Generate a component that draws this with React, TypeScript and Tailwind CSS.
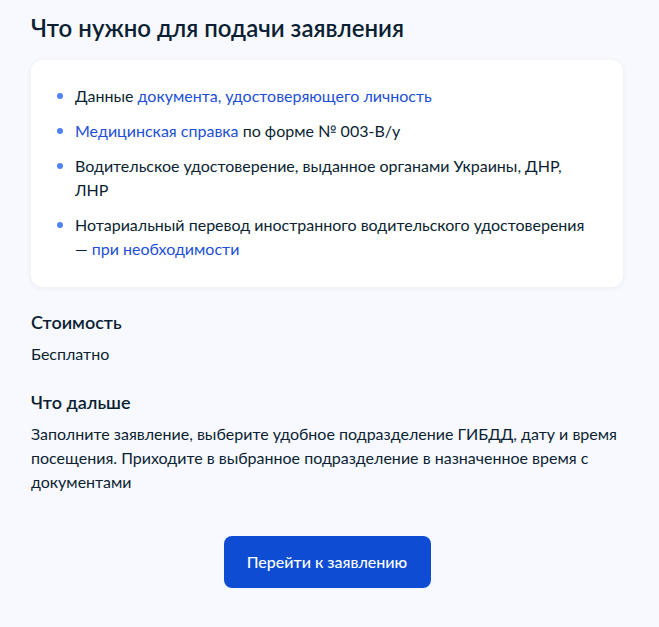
import React from "react";

export default function App() {
  const items: React.ReactNode[] = [
    <>Данные <a className="text-[#1d4fd6]">документа, удостоверяющего личность</a></>,
    <><a className="text-[#1d4fd6]">Медицинская справка</a> по форме № 003-В/у</>,
    <>Водительское удостоверение, выданное органами Украины, ДНР, ЛНР</>,
    <>Нотариальный перевод иностранного водительского удостоверения — <a className="text-[#1d4fd6]">при необходимости</a></>,
  ];
  return (
    <div className="min-h-[627px] bg-[#f8f9fe] text-[#0b1f33]" style={{ fontFamily: "Lato, 'Noto Sans', sans-serif" }}>
      <div className="w-[592px] ml-[31px] pt-[12px] pb-[39px]">
        <h1 className="text-[24px] leading-[32px] font-semibold">Что нужно для подачи заявления</h1>
        <div className="mt-[16px] rounded-[12px] bg-white shadow-[0_1px_6px_rgba(11,31,51,0.06)] px-[24px] pt-[24px] pb-[26px]">
          <ul className="flex flex-col gap-[11px]">
            {items.map((it, i) => (
              <li key={i} className="flex text-[16px] leading-[24px]">
                <span className="mt-[9px] ml-[2px] mr-[12px] h-[6px] w-[6px] shrink-0 rounded-full bg-[#4f82f3]" />
                <span>{it}</span>
              </li>
            ))}
          </ul>
        </div>
        <h2 className="mt-[23px] text-[18px] leading-[24px] font-semibold">Стоимость</h2>
        <p className="mt-[8px] text-[16px] leading-[24px]">Бесплатно</p>
        <h2 className="mt-[24px] text-[18px] leading-[24px] font-semibold">Что дальше</h2>
        <p className="mt-[8px] text-[16px] leading-[24px]">
          Заполните заявление, выберите удобное подразделение ГИБДД, дату и время посещения. Приходите в выбранное подразделение в назначенное время с документами
        </p>
        <div className="mt-[42px] flex justify-center">
          <button className="h-[52px] w-[207px] rounded-[8px] bg-[#0d4cd3] text-[16px] font-medium text-white">Перейти к заявлению</button>
        </div>
      </div>
    </div>
  );
}
